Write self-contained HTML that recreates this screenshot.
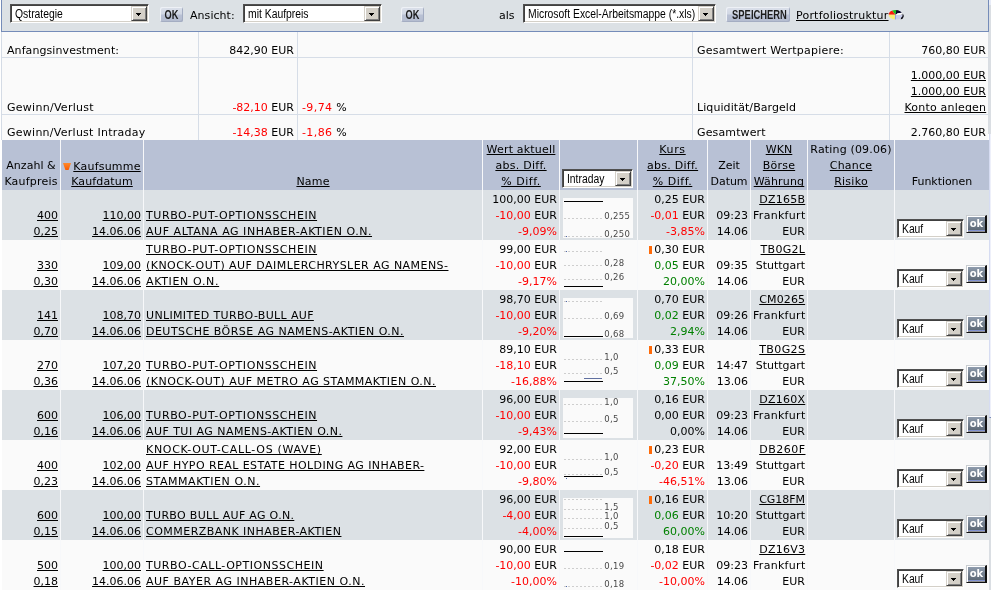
<!DOCTYPE html>
<html><head><meta charset="utf-8"><title>Depot</title>
<style>
html,body{margin:0;padding:0;background:#fff;}
body{will-change:transform;width:991px;height:590px;overflow:hidden;position:relative;font-family:"DejaVu Sans","Liberation Sans",sans-serif;font-size:11px;color:#000;line-height:16px;}
a{color:#000;text-decoration:underline;text-decoration-skip-ink:none;}
.r{color:#f00;}
.g{color:#008000;}
#tb{position:absolute;left:1px;top:0;width:986px;border-right:1px solid #758cb9;height:31px;background:#dce1e5;border-left:1px solid #758cb9;border-bottom:1px solid #758cb9;}
.sel{position:absolute;height:19px;box-sizing:border-box;background:#fff;border:1px solid;border-color:#505050 #fff #fff #505050;box-shadow:inset 1px 1px #404040,inset -1px -1px #d4d0c8;white-space:nowrap;overflow:hidden;}
.sel span{position:absolute;left:4px;top:2px;font-family:"Liberation Sans",sans-serif;font-size:12.5px;line-height:14px;transform:scaleX(.83);transform-origin:0 0;}
.sel i{position:absolute;right:1px;top:1px;bottom:1px;width:16px;background:#d4d0c8;box-sizing:border-box;border:1px solid;border-color:#d4d0c8 #404040 #404040 #d4d0c8;box-shadow:inset 1px 1px #fff,inset -1px -1px #808080;}
.sel i:after{content:"";position:absolute;left:4px;top:6px;width:5px;height:3px;background:linear-gradient(#000,#000) 0 0/5px 1px no-repeat,linear-gradient(#000,#000) 1px 1px/3px 1px no-repeat,linear-gradient(#000,#000) 2px 2px/1px 1px no-repeat;}
.sel.k span,.sel.h span{font-size:12px;transform:scaleX(.86)}
.btn{position:absolute;height:15px;box-sizing:border-box;border-radius:2px;background:linear-gradient(#dbe0ea 0%,#d2d8e4 45%,#b9c1d4 55%,#b4bccf 100%);box-shadow:inset 1px 1px #eef1f6,inset -1px -1px #a4adc2;text-align:center;}
.btn span{display:inline-block;font-family:"Liberation Sans",sans-serif;font-weight:bold;font-size:12.5px;line-height:15px;color:#1c1c1c;transform:scaleX(.78);transform-origin:50% 50%;position:relative;top:1px;}
.t{position:absolute;white-space:nowrap;}
#sum{position:absolute;left:1px;top:32px;width:986px;height:108px;background:#fafafa;border-left:1px solid #d4dbe5;}
.hl{position:absolute;left:0;width:986px;height:1px;background:#d6dde7;}
.vl{position:absolute;top:0;width:1px;height:108px;background:#d6dde7;}
.row{position:absolute;left:2px;width:987px;height:50px;}
.hd{background:#b8c1d5;}
.odd{background:#dce1e5;}
.even{background:#fafafa;}
.c{position:absolute;bottom:0;box-sizing:border-box;padding:0 2px;white-space:nowrap;}
.c div{height:16px;}
.ar{text-align:right;}
.ac{text-align:center;}
.cs{position:absolute;top:140px;width:1px;height:450px;background:#f7f8fa;}
.ch{position:absolute;left:561px;top:8px;width:70px;height:40px;background:#fafafa;}
.ch b{position:absolute;left:1px;width:39px;height:1px;background:#000;}
.ch u{position:absolute;left:1px;width:40px;height:1px;background:repeating-linear-gradient(90deg,#cecece 0,#cecece 2px,transparent 2px,transparent 4px);}
.ch s{position:absolute;left:41.2px;font-size:8.5px;line-height:10px;color:#484848;text-decoration:none;letter-spacing:.35px;}
.ok{position:absolute;left:964px;top:25px;width:21px;height:18px;box-sizing:border-box;border:1px solid;border-color:#c8ccd0 #101010 #101010 #c8ccd0;border-right-width:2px;box-shadow:inset 1px 1px #fff;background:linear-gradient(#8f9cad 0,#8f9cad 1px,#5d6976 14px,#8090d0 14px,#8090d0 15px,#909090 15px);color:#fff;font-family:"DejaVu Sans",sans-serif;font-weight:bold;font-size:10px;line-height:15px;text-align:center;padding-left:1px;}
.or{display:inline-block;width:3px;height:8px;background:#ff6a08;vertical-align:-1px;margin-right:2px;}
</style></head><body>
<div id="tb">
<div class="sel" style="left:8px;top:4px;width:139px"><span>Qstrategie</span><i></i></div>
<div class="btn" style="left:158px;top:7px;width:23px"><span style="transform:scaleX(.74)">OK</span></div>
<div class="t" style="left:188px;top:8px;letter-spacing:.05px">Ansicht:</div>
<div class="sel" style="left:241px;top:4px;width:139px"><span>mit Kaufpreis</span><i></i></div>
<div class="btn" style="left:399px;top:7px;width:23px"><span style="transform:scaleX(.74)">OK</span></div>
<div class="t" style="left:497px;top:8px">als</div>
<div class="sel" style="left:521px;top:4px;width:193px"><span>Microsoft Excel-Arbeitsmappe (*.xls)</span><i></i></div>
<div class="btn" style="left:724px;top:7px;width:64px"><span style="left:-3px;transform:scaleX(.75)">SPEICHERN</span></div>
<a class="t" style="left:794px;top:8px;letter-spacing:0.208px">Portfoliostruktur</a>
<svg class="t" style="left:886px;top:9px" width="18" height="12" viewBox="0 0 18 12"><path d="M14.3 4.4Q17 6.6 14.8 9.2L12.8 10.4L13.2 5Z" fill="#0c0c14"/><path d="M7.5 5.7L0.7 5.7A6.8 4.8 0 0 1 4.2 1.5Z" fill="#fa1a0a"/><path d="M7.5 5.7L4.2 1.5A6.8 4.8 0 0 1 8.2 0.9Z" fill="#14c214"/><path d="M7.5 5.7L8.2 0.9A6.8 4.8 0 0 1 13.8 3.9L9.5 4.4Z" fill="#06062a"/><path d="M7.5 5.7L0.7 5.7A6.8 4.8 0 0 0 7.3 10.5Z" fill="#f7ef74"/><path d="M7.6 5.9L14.7 5.5A6.8 4.7 0 0 1 7.4 10.5Z" fill="#c9cde9"/><path d="M7.8 5.9L9.6 4.3L13.7 3.8Q15.2 4.6 14.7 5.6Z" fill="#fbfbfd"/><path d="M7.55 5.9L7.4 10.4" stroke="#8a92f2" stroke-width=".9"/></svg>
</div>
<div id="sum">
<div class="hl" style="top:25px"></div><div class="hl" style="top:82px"></div>
<div class="vl" style="left:196px"></div><div class="vl" style="left:295px"></div><div class="vl" style="left:690px"></div><div class="vl" style="left:887px"></div>
<div class="t " style="left:5px;top:11px"><span style="letter-spacing:0.081px;">Anfangsinvestment:</span></div>
<div class="t " style="left:5px;top:68px"><span style="letter-spacing:0.275px;">Gewinn/Verlust</span></div>
<div class="t " style="left:5px;top:93px"><span style="letter-spacing:0.261px;">Gewinn/Verlust Intraday</span></div>
<div class="t " style="right:694px;top:11px">842,90 EUR</div>
<div class="t " style="right:694px;top:68px"><span class="r">-82,10</span> EUR</div>
<div class="t " style="right:694px;top:93px"><span class="r">-14,38</span> EUR</div>
<div class="t " style="left:300px;top:68px"><span style="letter-spacing:.4px"><span class="r">-9,74</span> %</span></div>
<div class="t " style="left:300px;top:93px"><span style="letter-spacing:.4px"><span class="r">-1,86</span> %</span></div>
<div class="t " style="left:695px;top:11px"><span style="letter-spacing:0.208px;">Gesamtwert Wertpapiere:</span></div>
<div class="t " style="left:695px;top:68px"><span style="letter-spacing:0.075px;">Liquidität/Bargeld</span></div>
<div class="t " style="left:695px;top:93px"><span style="letter-spacing:0.133px;">Gesamtwert</span></div>
<div class="t " style="right:2px;top:11px">760,80 EUR</div>
<div class="t " style="right:2px;top:36px"><a>1.000,00 EUR</a></div>
<div class="t " style="right:2px;top:52px"><a>1.000,00 EUR</a></div>
<div class="t " style="right:2px;top:68px"><a style="letter-spacing:0.194px;margin-right:-0.194px">Konto anlegen</a></div>
<div class="t " style="right:2px;top:93px">2.760,80 EUR</div>
</div>
<div class="row hd" style="top:140px">
<div class="c ac " style="left:0px;width:58px"><div><span style="letter-spacing:0.039px;">Anzahl &amp;</span></div><div><span style="letter-spacing:0.195px;">Kaufpreis</span></div></div><div class="c ac " style="left:59px;width:82px"><div><svg width="8" height="7" viewBox="0 0 8 7" style="vertical-align:-1px;margin-right:2px;position:relative;top:0"><defs><linearGradient id="og" x1="0" y1="0" x2="0" y2="1"><stop offset="0" stop-color="#ff8a2c"/><stop offset="1" stop-color="#fa5a00"/></linearGradient></defs><path d="M0 0H8L5.6 7H2.4Z" fill="url(#og)"/></svg><a style="letter-spacing:0.211px;position:relative;top:1px">Kaufsumme</a></div><div><a style="letter-spacing:0.134px;">Kaufdatum</a></div></div><div class="c ac " style="left:142px;width:338px"><div><a style="letter-spacing:0.182px;">Name</a></div></div><div class="c ac " style="left:481px;width:76px"><div><a style="letter-spacing:0.181px;">Wert aktuell</a></div><div><a style="letter-spacing:0.282px;">abs. Diff.</a></div><div><a style="letter-spacing:0.523px;">% Diff.</a></div></div><div class="sel h" style="left:560px;top:29px;width:71px"><span>Intraday</span><i></i></div><div class="c ac " style="left:636px;width:69px"><div><a style="letter-spacing:0.636px;">Kurs</a></div><div><a style="letter-spacing:0.282px;">abs. Diff.</a></div><div><a style="letter-spacing:0.523px;">% Diff.</a></div></div><div class="c ac " style="left:706px;width:42px"><div><span style="letter-spacing:-0.096px;">Zeit</span></div><div><span style="letter-spacing:-0.055px;">Datum</span></div></div><div class="c ac " style="left:749px;width:56px"><div><a style="letter-spacing:0.086px;">WKN</a></div><div><a style="letter-spacing:0.197px;">Börse</a></div><div><a style="letter-spacing:0.176px;">Währung</a></div></div><div class="c ac " style="left:806px;width:86px"><div><span style="letter-spacing:0.166px;">Rating (09.06)</span></div><div><a style="letter-spacing:0.222px;">Chance</a></div><div><a style="letter-spacing:0.259px;">Risiko</a></div></div><div class="c ac " style="left:893px;width:94px"><div><span style="letter-spacing:-0.04px;">Funktionen</span></div></div>
</div>
<div class="row odd" style="top:190px">
<div class="c ar " style="left:0px;width:58px"><div><a>400</a></div><div><a>0,25</a></div></div><div class="c ar " style="left:59px;width:82px"><div><a>110,00</a></div><div><a>14.06.06</a></div></div><div class="c  nm" style="left:142px;width:338px"><div><a style="letter-spacing:0.575px">TURBO-PUT-OPTIONSSCHEIN</a></div><div><a style="letter-spacing:0.541px">AUF ALTANA AG INHABER-AKTIEN O.N.</a></div></div><div class="c ar " style="left:481px;width:76px"><div>100,00 EUR</div><div><span class="r">-10,00</span> EUR</div><div><span class="r">-9,09%</span></div></div><div class="ch"><b style="top:3px"></b><u style="top:20px"></u><u style="top:38px"></u><s style="top:13px">0,255</s><s style="top:31px">0,250</s><b style="left:3px;top:38px;width:1px;background:#5068a8"></b></div><div class="c ar " style="left:636px;width:69px"><div>0,25 EUR</div><div><span class="r">-0,01</span> EUR</div><div><span class="r">-3,85%</span></div></div><div class="c ar " style="left:706px;width:42px"><div><span style="letter-spacing:0.024px;margin-right:-0.024px">09:23</span></div><div><span style="letter-spacing:-0.075px;margin-right:0.075px">14.06</span></div></div><div class="c ar " style="left:749px;width:56px"><div><a style="letter-spacing:0.247px;margin-right:-0.247px">DZ165B</a></div><div><span style="letter-spacing:0.298px;margin-right:-0.298px">Frankfurt</span></div><div>EUR</div></div><div class="sel k" style="left:895px;top:29px;width:67px"><span>Kauf</span><i></i></div><div class="ok">ok</div>
</div>
<div class="row even" style="top:240px">
<div class="c ar " style="left:0px;width:58px"><div><a>330</a></div><div><a>0,30</a></div></div><div class="c ar " style="left:59px;width:82px"><div><a>109,00</a></div><div><a>14.06.06</a></div></div><div class="c  nm" style="left:142px;width:338px"><div><a style="letter-spacing:0.575px">TURBO-PUT-OPTIONSSCHEIN</a></div><div><a style="letter-spacing:0.457px">(KNOCK-OUT) AUF DAIMLERCHRYSLER AG NAMENS-</a></div><div><a style="letter-spacing:0.653px">AKTIEN O.N.</a></div></div><div class="c ar " style="left:481px;width:76px"><div>99,00 EUR</div><div><span class="r">-10,00</span> EUR</div><div><span class="r">-9,17%</span></div></div><div class="ch"><b style="top:38px"></b><u style="top:3px"></u><u style="top:17px"></u><u style="top:31px"></u><s style="top:10px">0,28</s><s style="top:24px">0,26</s><b style="left:3px;top:3px;width:1px;background:#5068a8"></b></div><div class="c ar " style="left:636px;width:69px"><div><i class="or"></i>0,30 EUR</div><div><span class="g">0,05</span> EUR</div><div><span class="g">20,00%</span></div></div><div class="c ar " style="left:706px;width:42px"><div><span style="letter-spacing:0.024px;margin-right:-0.024px">09:35</span></div><div><span style="letter-spacing:-0.075px;margin-right:0.075px">14.06</span></div></div><div class="c ar " style="left:749px;width:56px"><div><a style="letter-spacing:0.296px;margin-right:-0.296px">TB0G2L</a></div><div><span style="letter-spacing:-0.019px;margin-right:0.019px">Stuttgart</span></div><div>EUR</div></div><div class="sel k" style="left:895px;top:29px;width:67px"><span>Kauf</span><i></i></div><div class="ok">ok</div>
</div>
<div class="row odd" style="top:290px">
<div class="c ar " style="left:0px;width:58px"><div><a>141</a></div><div><a>0,70</a></div></div><div class="c ar " style="left:59px;width:82px"><div><a>108,70</a></div><div><a>14.06.06</a></div></div><div class="c  nm" style="left:142px;width:338px"><div><a style="letter-spacing:0.344px">UNLIMITED TURBO-BULL AUF</a></div><div><a style="letter-spacing:0.468px">DEUTSCHE BÖRSE AG NAMENS-AKTIEN O.N.</a></div></div><div class="c ar " style="left:481px;width:76px"><div>98,70 EUR</div><div><span class="r">-10,00</span> EUR</div><div><span class="r">-9,20%</span></div></div><div class="ch"><b style="top:38px"></b><u style="top:3px"></u><u style="top:20px"></u><s style="top:13px">0,69</s><s style="top:31px">0,68</s><b style="left:3px;top:3px;width:1px;background:#5068a8"></b></div><div class="c ar " style="left:636px;width:69px"><div>0,70 EUR</div><div><span class="g">0,02</span> EUR</div><div><span class="g">2,94%</span></div></div><div class="c ar " style="left:706px;width:42px"><div><span style="letter-spacing:0.024px;margin-right:-0.024px">09:26</span></div><div><span style="letter-spacing:-0.075px;margin-right:0.075px">14.06</span></div></div><div class="c ar " style="left:749px;width:56px"><div><a style="letter-spacing:0.126px;margin-right:-0.126px">CM0265</a></div><div><span style="letter-spacing:0.298px;margin-right:-0.298px">Frankfurt</span></div><div>EUR</div></div><div class="sel k" style="left:895px;top:29px;width:67px"><span>Kauf</span><i></i></div><div class="ok">ok</div>
</div>
<div class="row even" style="top:340px">
<div class="c ar " style="left:0px;width:58px"><div><a>270</a></div><div><a>0,36</a></div></div><div class="c ar " style="left:59px;width:82px"><div><a>107,20</a></div><div><a>14.06.06</a></div></div><div class="c  nm" style="left:142px;width:338px"><div><a style="letter-spacing:0.575px">TURBO-PUT-OPTIONSSCHEIN</a></div><div><a style="letter-spacing:0.471px">(KNOCK-OUT) AUF METRO AG STAMMAKTIEN O.N.</a></div></div><div class="c ar " style="left:481px;width:76px"><div>89,10 EUR</div><div><span class="r">-18,10</span> EUR</div><div><span class="r">-16,88%</span></div></div><div class="ch"><b style="top:33px"></b><u style="top:11px"></u><u style="top:25px"></u><s style="top:4px">1,0</s><s style="top:18px">0,5</s><b style="left:21px;top:30px;width:18px;background:#6070a0"></b></div><div class="c ar " style="left:636px;width:69px"><div><i class="or"></i>0,33 EUR</div><div><span class="g">0,09</span> EUR</div><div><span class="g">37,50%</span></div></div><div class="c ar " style="left:706px;width:42px"><div><span style="letter-spacing:0.024px;margin-right:-0.024px">14:47</span></div><div><span style="letter-spacing:-0.075px;margin-right:0.075px">13.06</span></div></div><div class="c ar " style="left:749px;width:56px"><div><a style="letter-spacing:0.404px;margin-right:-0.404px">TB0G2S</a></div><div><span style="letter-spacing:-0.019px;margin-right:0.019px">Stuttgart</span></div><div>EUR</div></div><div class="sel k" style="left:895px;top:29px;width:67px"><span>Kauf</span><i></i></div><div class="ok">ok</div>
</div>
<div class="row odd" style="top:390px">
<div class="c ar " style="left:0px;width:58px"><div><a>600</a></div><div><a>0,16</a></div></div><div class="c ar " style="left:59px;width:82px"><div><a>106,00</a></div><div><a>14.06.06</a></div></div><div class="c  nm" style="left:142px;width:338px"><div><a style="letter-spacing:0.575px">TURBO-PUT-OPTIONSSCHEIN</a></div><div><a style="letter-spacing:0.451px">AUF TUI AG NAMENS-AKTIEN O.N.</a></div></div><div class="c ar " style="left:481px;width:76px"><div>96,00 EUR</div><div><span class="r">-10,00</span> EUR</div><div><span class="r">-9,43%</span></div></div><div class="ch"><b style="top:35px"></b><u style="top:6px"></u><u style="top:23px"></u><s style="top:-1px">1,0</s><s style="top:16px">0,5</s></div><div class="c ar " style="left:636px;width:69px"><div>0,16 EUR</div><div>0,00 EUR</div><div>0,00%</div></div><div class="c ar " style="left:706px;width:42px"><div><span style="letter-spacing:0.024px;margin-right:-0.024px">09:23</span></div><div><span style="letter-spacing:-0.075px;margin-right:0.075px">14.06</span></div></div><div class="c ar " style="left:749px;width:56px"><div><a style="letter-spacing:0.251px;margin-right:-0.251px">DZ160X</a></div><div><span style="letter-spacing:0.298px;margin-right:-0.298px">Frankfurt</span></div><div>EUR</div></div><div class="sel k" style="left:895px;top:29px;width:67px"><span>Kauf</span><i></i></div><div class="ok">ok</div>
</div>
<div class="row even" style="top:440px">
<div class="c ar " style="left:0px;width:58px"><div><a>400</a></div><div><a>0,23</a></div></div><div class="c ar " style="left:59px;width:82px"><div><a>102,00</a></div><div><a>14.06.06</a></div></div><div class="c  nm" style="left:142px;width:338px"><div><a style="letter-spacing:0.685px">KNOCK-OUT-CALL-OS (WAVE)</a></div><div><a style="letter-spacing:0.413px">AUF HYPO REAL ESTATE HOLDING AG INHABER-</a></div><div><a style="letter-spacing:0.546px">STAMMAKTIEN O.N.</a></div></div><div class="c ar " style="left:481px;width:76px"><div>92,00 EUR</div><div><span class="r">-10,00</span> EUR</div><div><span class="r">-9,80%</span></div></div><div class="ch"><b style="top:28px"></b><u style="top:11px"></u><u style="top:26px"></u><s style="top:4px">1,0</s><s style="top:19px">0,5</s><b style="left:3px;top:30px;width:1px;background:#5068a8"></b></div><div class="c ar " style="left:636px;width:69px"><div><i class="or"></i>0,23 EUR</div><div><span class="r">-0,20</span> EUR</div><div><span class="r">-46,51%</span></div></div><div class="c ar " style="left:706px;width:42px"><div><span style="letter-spacing:0.024px;margin-right:-0.024px">13:49</span></div><div><span style="letter-spacing:-0.075px;margin-right:0.075px">13.06</span></div></div><div class="c ar " style="left:749px;width:56px"><div><a style="letter-spacing:0.491px;margin-right:-0.491px">DB260F</a></div><div><span style="letter-spacing:-0.019px;margin-right:0.019px">Stuttgart</span></div><div>EUR</div></div><div class="sel k" style="left:895px;top:29px;width:67px"><span>Kauf</span><i></i></div><div class="ok">ok</div>
</div>
<div class="row odd" style="top:490px">
<div class="c ar " style="left:0px;width:58px"><div><a>600</a></div><div><a>0,15</a></div></div><div class="c ar " style="left:59px;width:82px"><div><a>100,00</a></div><div><a>14.06.06</a></div></div><div class="c  nm" style="left:142px;width:338px"><div><a style="letter-spacing:0.311px">TURBO BULL AUF AG O.N.</a></div><div><a style="letter-spacing:0.472px">COMMERZBANK INHABER-AKTIEN</a></div></div><div class="c ar " style="left:481px;width:76px"><div>96,00 EUR</div><div><span class="r">-4,00</span> EUR</div><div><span class="r">-4,00%</span></div></div><div class="ch"><b style="top:38px"></b><u style="top:1px"></u><u style="top:11px"></u><u style="top:20px"></u><u style="top:30px"></u><s style="top:4px">1,5</s><s style="top:13px">1,0</s><s style="top:23px">0,5</s></div><div class="c ar " style="left:636px;width:69px"><div><i class="or"></i>0,16 EUR</div><div><span class="g">0,06</span> EUR</div><div><span class="g">60,00%</span></div></div><div class="c ar " style="left:706px;width:42px"><div><span style="letter-spacing:0.024px;margin-right:-0.024px">10:20</span></div><div><span style="letter-spacing:-0.075px;margin-right:0.075px">14.06</span></div></div><div class="c ar " style="left:749px;width:56px"><div><a style="letter-spacing:-0.046px;margin-right:0.046px">CG18FM</a></div><div><span style="letter-spacing:-0.019px;margin-right:0.019px">Stuttgart</span></div><div>EUR</div></div><div class="sel k" style="left:895px;top:29px;width:67px"><span>Kauf</span><i></i></div><div class="ok">ok</div>
</div>
<div class="row even" style="top:540px">
<div class="c ar " style="left:0px;width:58px"><div><a>500</a></div><div><a>0,18</a></div></div><div class="c ar " style="left:59px;width:82px"><div><a>100,00</a></div><div><a>14.06.06</a></div></div><div class="c  nm" style="left:142px;width:338px"><div><a style="letter-spacing:0.538px">TURBO-CALL-OPTIONSSCHEIN</a></div><div><a style="letter-spacing:0.518px">AUF BAYER AG INHABER-AKTIEN O.N.</a></div></div><div class="c ar " style="left:481px;width:76px"><div>90,00 EUR</div><div><span class="r">-10,00</span> EUR</div><div><span class="r">-10,00%</span></div></div><div class="ch"><b style="top:3px"></b><u style="top:20px"></u><u style="top:38px"></u><s style="top:13px">0,19</s><s style="top:31px">0,18</s><b style="left:3px;top:38px;width:1px;background:#5068a8"></b></div><div class="c ar " style="left:636px;width:69px"><div>0,18 EUR</div><div><span class="r">-0,02</span> EUR</div><div><span class="r">-10,00%</span></div></div><div class="c ar " style="left:706px;width:42px"><div><span style="letter-spacing:0.024px;margin-right:-0.024px">09:23</span></div><div><span style="letter-spacing:-0.075px;margin-right:0.075px">14.06</span></div></div><div class="c ar " style="left:749px;width:56px"><div><a style="letter-spacing:0.254px;margin-right:-0.254px">DZ16V3</a></div><div><span style="letter-spacing:0.298px;margin-right:-0.298px">Frankfurt</span></div><div>EUR</div></div><div class="sel k" style="left:895px;top:29px;width:67px"><span>Kauf</span><i></i></div><div class="ok">ok</div>
</div>
<div class="cs" style="left:60px"></div><div class="cs" style="left:143px"></div><div class="cs" style="left:482px"></div><div class="cs" style="left:559px"></div><div class="cs" style="left:637px"></div><div class="cs" style="left:707px"></div><div class="cs" style="left:750px"></div><div class="cs" style="left:807px"></div><div class="cs" style="left:894px"></div><div style="position:absolute;left:988px;top:32px;width:3px;height:102px;background:#d9dde2"></div><div style="position:absolute;left:989px;top:5px;width:2px;height:585px;background:#dadee3"></div><div style="position:absolute;left:989px;top:0;width:2px;height:5px;background:#e8ecf8"></div><div style="position:absolute;left:989px;top:134px;width:2px;height:284px;background:#eef0fa;border-left:1px solid #d6dcf2;border-bottom:1px solid #7c8cb8;box-sizing:border-box"></div>
</body></html>
